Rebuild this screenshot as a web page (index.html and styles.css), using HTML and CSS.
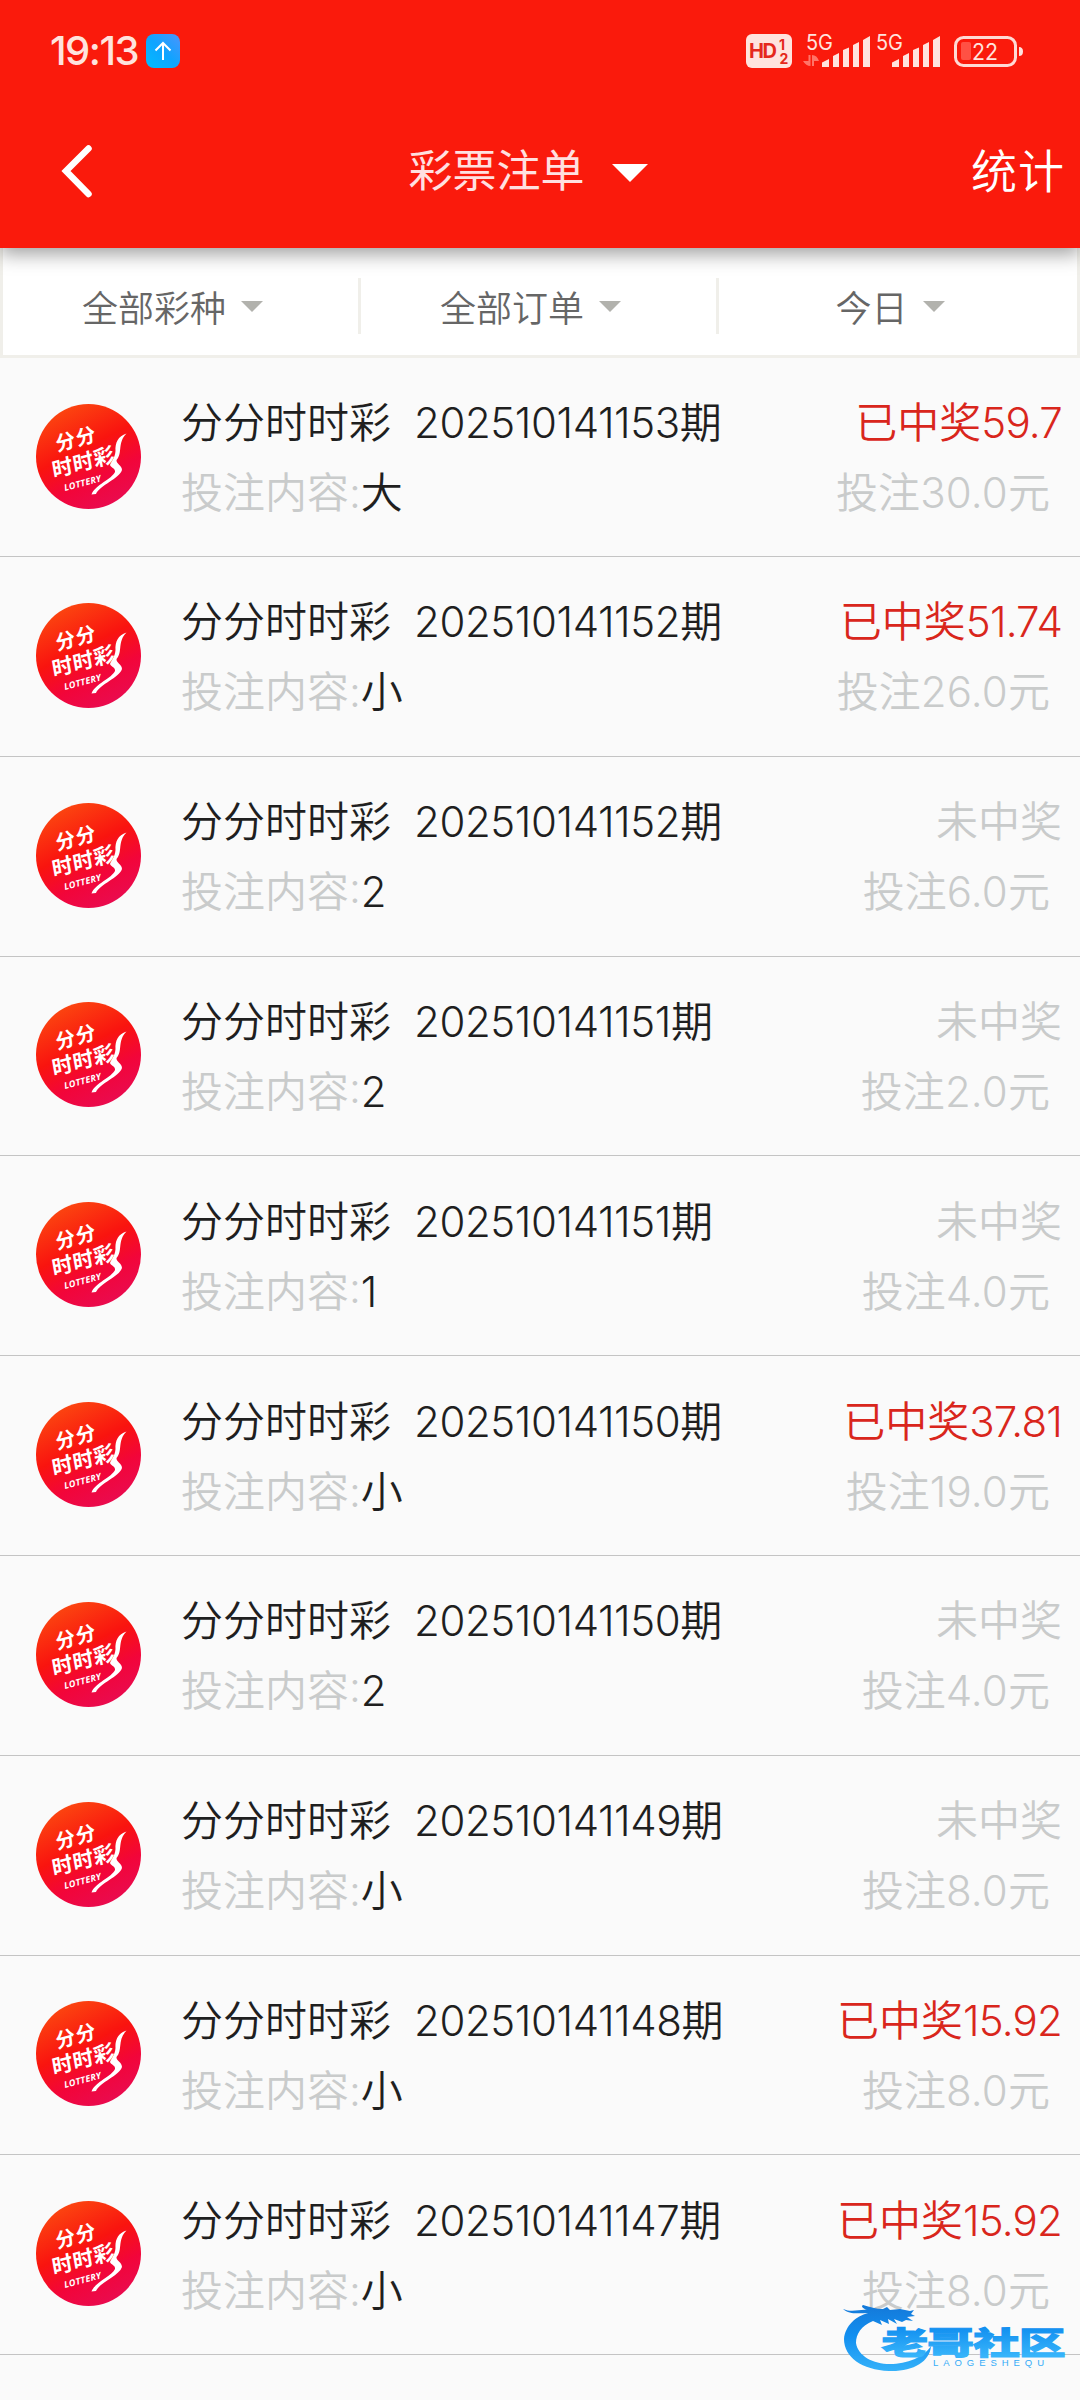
FILE: index.html
```html
<!DOCTYPE html>
<html lang="zh-CN">
<head>
<meta charset="utf-8">
<title>彩票注单</title>
<link rel="stylesheet" href="styles.css">
</head>
<body>
<svg class="defs" width="0" height="0" aria-hidden="true">
  <defs>
    <linearGradient id="ball" x1="0.25" y1="0" x2="0.75" y2="1">
      <stop offset="0" stop-color="#fc4a10"/><stop offset="0.42" stop-color="#f9140f"/><stop offset="0.7" stop-color="#f2053a"/><stop offset="1" stop-color="#e80c52"/>
    </linearGradient>
    <symbol id="logo" viewBox="0 0 105 105">
      <circle cx="52.5" cy="52.5" r="52.5" fill="url(#ball)"/>
      <g fill="#fff" class="logo-text">
        <text transform="translate(21 47.500) rotate(-15) skewX(-5)" font-size="20" letter-spacing="1">分分</text>
        <text transform="translate(17.500 74) rotate(-15) skewX(-5)" font-size="21" letter-spacing="0.500">时时彩</text>
        <text transform="translate(29 87) rotate(-15)" font-size="9" class="logo-latin" textLength="38">LOTTERY</text>
      </g>
      <path fill="#fff" d="M90.500 29.500C82 32 79 39 79.500 47C79 54 75 58 74 61C75 64 79.500 64 79 68C76 75 59 81 55.500 90.500L60 90C64 81 83 75 86 66C86 61 80 60 80.500 56C87 49 81 39 90.500 29.500Z"/>
    </symbol>
  </defs>
</svg>

<header class="header">
  <div class="status">
    <div class="status-left">
      <span class="clock">19:13</span>
      <svg class="upload" width="34" height="34" viewBox="0 0 34 34">
        <defs><linearGradient id="up" x1="0" y1="1" x2="1" y2="0"><stop offset="0" stop-color="#00bdff"/><stop offset="0.5" stop-color="#0fa4ff"/><stop offset="1" stop-color="#4d94fb"/></linearGradient></defs>
        <rect width="34" height="34" rx="8" fill="url(#up)"/>
        <path d="M17 26V9M9.500 16.500L17 9L24.500 16.500" fill="none" stroke="#fff" stroke-width="2"/>
      </svg>
    </div>
    <svg class="indicators" width="280" height="40" viewBox="0 0 280 40">
      <rect x="0" y="3" width="46" height="34" rx="6" fill="#ffe3de"/>
      <g fill="#e5281c" font-weight="700">
        <text x="3" y="27" font-size="20" textLength="28">HD</text>
        <text x="33" y="18.500" font-size="14">1</text>
        <text x="33.500" y="33" font-size="14">2</text>
      </g>
      <g fill="#ffe3de" font-size="21">
        <text x="60" y="18.500" textLength="27" lengthAdjust="spacingAndGlyphs">5G</text>
        <text x="130" y="18.500" textLength="27" lengthAdjust="spacingAndGlyphs">5G</text>
      </g>
      <path fill="#ff7468" d="M57 30H62.500V24H64.500V35Q60 35 57 30ZM73 30H68V35H66V24Q71 24 73 30Z"/>
      <g fill="#ffe3de">
        <path id="bars" d="M76 36V31.500L83 28V36ZM87 36V25L93 22V36ZM97 36V19L103 16.500V36ZM107 36V14L113 11V36ZM117 36V9L124 5V36Z"/>
        <use href="#bars" x="70"/>
      </g>
      <rect x="209.500" y="6.500" width="60" height="28" rx="8" fill="none" stroke="#ffdad5" stroke-width="3"/>
      <rect x="215" y="11" width="10" height="18" rx="2" fill="#ff5144"/>
      <path d="M273 16Q277 16 277 20.500Q277 25 273 25Z" fill="#ffe3de"/>
      <text x="226" y="29" font-size="23" fill="#ffe3de" textLength="26" lengthAdjust="spacingAndGlyphs">22</text>
    </svg>
  </div>
  <nav class="navbar">
    <svg class="back" width="34" height="56" viewBox="0 0 34 56"><path d="M29.500 5.500L7 28L29.500 51" fill="none" stroke="#fff" stroke-width="6.500" stroke-linecap="round"/></svg>
    <div class="nav-title"><span>彩票注单</span><i class="caret"></i></div>
    <span class="stats">统计</span>
  </nav>
</header>

<div class="filters">
  <div class="filter"><span>全部彩种</span><i class="caret"></i></div>
  <div class="filter"><span>全部订单</span><i class="caret"></i></div>
  <div class="filter"><span>今日</span><i class="caret"></i></div>
</div>

<main class="list">
  <article class="row"><svg class="logo"><use href="#logo"/></svg><div class="info"><div class="name">分分时时彩<b class="n">202510141153</b>期</div><div class="bet">投注内容:<em>大</em></div></div><div class="result"><div class="win">已中奖<b class="n">59.7</b></div><div class="stake">投注<b class="n">30.0</b>元</div></div></article>
  <article class="row"><svg class="logo"><use href="#logo"/></svg><div class="info"><div class="name">分分时时彩<b class="n">202510141152</b>期</div><div class="bet">投注内容:<em>小</em></div></div><div class="result"><div class="win">已中奖<b class="n">51.74</b></div><div class="stake">投注<b class="n">26.0</b>元</div></div></article>
  <article class="row"><svg class="logo"><use href="#logo"/></svg><div class="info"><div class="name">分分时时彩<b class="n">202510141152</b>期</div><div class="bet">投注内容:<em>2</em></div></div><div class="result"><div class="lose">未中奖</div><div class="stake">投注<b class="n">6.0</b>元</div></div></article>
  <article class="row"><svg class="logo"><use href="#logo"/></svg><div class="info"><div class="name">分分时时彩<b class="n">202510141151</b>期</div><div class="bet">投注内容:<em>2</em></div></div><div class="result"><div class="lose">未中奖</div><div class="stake">投注<b class="n">2.0</b>元</div></div></article>
  <article class="row"><svg class="logo"><use href="#logo"/></svg><div class="info"><div class="name">分分时时彩<b class="n">202510141151</b>期</div><div class="bet">投注内容:<em>1</em></div></div><div class="result"><div class="lose">未中奖</div><div class="stake">投注<b class="n">4.0</b>元</div></div></article>
  <article class="row"><svg class="logo"><use href="#logo"/></svg><div class="info"><div class="name">分分时时彩<b class="n">202510141150</b>期</div><div class="bet">投注内容:<em>小</em></div></div><div class="result"><div class="win">已中奖<b class="n">37.81</b></div><div class="stake">投注<b class="n">19.0</b>元</div></div></article>
  <article class="row"><svg class="logo"><use href="#logo"/></svg><div class="info"><div class="name">分分时时彩<b class="n">202510141150</b>期</div><div class="bet">投注内容:<em>2</em></div></div><div class="result"><div class="lose">未中奖</div><div class="stake">投注<b class="n">4.0</b>元</div></div></article>
  <article class="row"><svg class="logo"><use href="#logo"/></svg><div class="info"><div class="name">分分时时彩<b class="n">202510141149</b>期</div><div class="bet">投注内容:<em>小</em></div></div><div class="result"><div class="lose">未中奖</div><div class="stake">投注<b class="n">8.0</b>元</div></div></article>
  <article class="row"><svg class="logo"><use href="#logo"/></svg><div class="info"><div class="name">分分时时彩<b class="n">202510141148</b>期</div><div class="bet">投注内容:<em>小</em></div></div><div class="result"><div class="win">已中奖<b class="n">15.92</b></div><div class="stake">投注<b class="n">8.0</b>元</div></div></article>
  <article class="row"><svg class="logo"><use href="#logo"/></svg><div class="info"><div class="name">分分时时彩<b class="n">202510141147</b>期</div><div class="bet">投注内容:<em>小</em></div></div><div class="result"><div class="win">已中奖<b class="n">15.92</b></div><div class="stake">投注<b class="n">8.0</b>元</div></div></article>
</main>

<svg class="watermark" width="224" height="72" viewBox="0 0 224 72">
  <defs><linearGradient id="wm" gradientUnits="userSpaceOnUse" x1="0" y1="0" x2="0" y2="70"><stop offset="0" stop-color="#1478d8"/><stop offset="0.45" stop-color="#128ff0"/><stop offset="1" stop-color="#37b4fa"/></linearGradient></defs>
  <g fill="url(#wm)">
    <path d="M1 5C10 9 18 5 25 6C20 4 19 2 21 1C28 3 34 5 41 5L45 3L48 6L58 5L68 7L72 6L69 10L73 12L65 13L71 17L64 16L60 18L52 15L55 20L46 15L47 20L38 16L40 21L31 17C19 22 14 30 14 39C16 52 31 60 48 60C65 60 82 53 89 42C88 58 70 68 47 67C20 66 2 53 2 35C3 22 14 12 26 9C17 9 8 11 1 5Z"/>
    <g transform="scale(1.110 .740)"><text class="wm-cn" x="35.500" y="67" font-size="42" textLength="166">老哥社区</text></g>
    <text class="wm-en" x="91" y="62" font-size="9.500" textLength="111">LAOGESHEQU</text>
  </g>
</svg>
</body>
</html>
```
FILE: styles.css
```css
* { box-sizing: border-box; }

body {
  margin: 0;
  position: relative;
  height: 2400px;
  overflow: hidden;
  background: #fafafa;
  color: #1f1f1f;
  font-family: Inter, "Noto Sans CJK SC", sans-serif;
  font-size: 42px;
}

.defs { position: absolute; }

.header {
  position: relative;
  z-index: 1;
  height: 248px;
  background: #fa1a0c;
  box-shadow: 0 6px 18px rgba(0, 0, 0, .38);
}

.status {
  display: flex;
  justify-content: space-between;
  align-items: center;
  height: 102px;
  padding: 0 54px 0 50px;
}

.status-left { display: flex; align-items: center; gap: 8px; }

.clock {
  width: 88px;
  font: 500 40px/48px Inter, sans-serif;
  letter-spacing: -1.5px;
  color: #ffe3de;
  white-space: nowrap;
}

.indicators { font-family: Inter, sans-serif; }

.navbar {
  display: grid;
  grid-template-columns: 1fr auto 1fr;
  align-items: center;
  height: 138px;
  padding: 0 15px 0 59px;
}

.nav-title {
  display: flex;
  align-items: center;
  gap: 27px;
  padding-right: 68px;
  font-size: 44px;
  line-height: 60px;
  font-weight: 400;
  color: #ffe0e0;
}

.nav-title .caret { --w: 18px; --h: 18px; --c: #fff; margin-top: 4px; }

.stats {
  justify-self: end;
  color: #fff;
  font-size: 46px;
  line-height: 60px;
  letter-spacing: 1px;
  font-weight: 350;
}

.caret {
  border-left: var(--w) solid transparent;
  border-right: var(--w) solid transparent;
  border-top: var(--h) solid var(--c);
}

.filters {
  display: grid;
  grid-template-columns: 358px 358px 1fr;
  height: 110px;
  border: 3px solid #f0efea;
  border-top: 0;
  background: #fff;
  color: #666;
  font-size: 36px;
  font-weight: 350;
}

.filter {
  display: flex;
  align-items: center;
  justify-content: center;
  gap: 15px;
  height: 56px;
  margin-top: 30px;
  padding-right: 16px;
  border-right: 3px solid #f0efea;
}

.filter:last-child { border-right: 0; }
.filter .caret { --w: 11px; --h: 11px; --c: #b2b2ad; }

.row {
  display: flex;
  align-items: center;
  height: 199.800px;
  padding: 0 18px 0 36px;
  border-bottom: 1px solid #c4c4c4;
}

.row:first-child { height: 199px; }

.logo { width: 105px; height: 105px; margin: -2px 40px 0 0; flex: none; }
.logo-text { font-family: "Noto Sans CJK SC", sans-serif; font-weight: 700; }
.logo-latin { font-family: "Open Sans", sans-serif; font-style: italic; }

.info, .result { display: flex; flex-direction: column; padding-top: 2px; line-height: 70px; white-space: nowrap; }
.info { flex: 1; }
.result { align-items: flex-end; }
.name, .win { font-weight: 350; }
.n { font-weight: inherit; }
.name .n { margin-left: 23px; letter-spacing: -.4px; }
.win .n { letter-spacing: -.8px; }
.bet, .stake, .lose { color: #c9cbcb; font-weight: 350; }
.bet em { color: #1f1f1f; font-style: normal; }
.win { color: #d9261c; }
.stake { padding-right: 12px; }
.stake .n { letter-spacing: .2px; }

.watermark { position: absolute; left: 842px; top: 2304px; }
.wm-cn { font-family: "Noto Sans CJK SC", sans-serif; font-weight: 900; stroke: url(#wm); stroke-width: 1.5px; }
.wm-en { font-family: "Liberation Sans", sans-serif; }
```
